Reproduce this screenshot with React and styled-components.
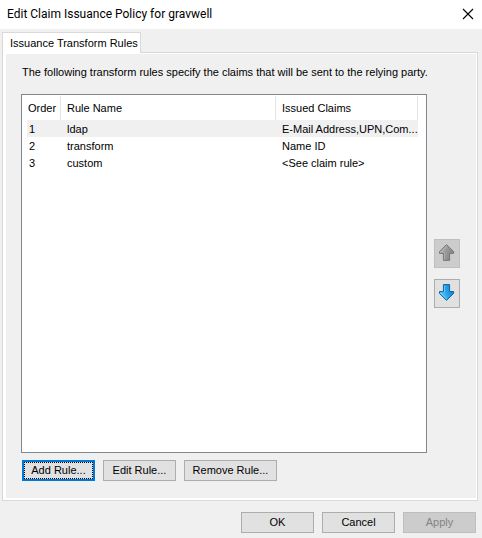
import React from "react";
import styled, { createGlobalStyle } from "styled-components";

const GlobalStyle = createGlobalStyle`
  *, *::before, *::after { box-sizing: border-box; }
  body {
    margin: 0;
    background: #f0f0f0;
    color: #000;
    font: 11px/17px "Liberation Sans", Arial, sans-serif;
  }
`;

const Dialog = styled.main`
  display: flex;
  flex-direction: column;
  min-height: 100vh;
  background: #f0f0f0;
`;

const TitleBar = styled.header`
  display: flex;
  align-items: center;
  justify-content: space-between;
  height: 29px;
  padding: 0 8px 2px 7px;
  background: #fff;
`;

const Title = styled.h1`
  margin: 0;
  font: 12px/20px Roboto, "Open Sans", sans-serif;
`;

const CloseButton = styled.button`
  display: flex;
  padding: 0;
  border: 0;
  background: none;
`;

const TabList = styled.div`
  display: flex;
  padding: 3px 4px 0 2px;
`;

const Tab = styled.button`
  position: relative;
  z-index: 1;
  height: 21px;
  width: 139px;
  margin-bottom: -1px;
  padding: 0 0 0 7px;
  border: 1px solid #d9d9d9;
  border-bottom: 0;
  background: #fff;
  color: inherit;
  font: inherit;
  text-align: left;
  white-space: nowrap;
`;

const Panel = styled.section`
  flex: 1;
  display: flex;
  flex-direction: column;
  margin: 0 4px 0 2px;
  padding: 11px 17px 19px 15px;
  border: 1px solid #d9d9d9;
  background: #f0f0f0;
  box-shadow: inset 3px 1px #fff, inset -1px -2px #fff;
`;

const Description = styled.p`
  margin: 0 0 13px 4px;
`;

const Content = styled.div`
  flex: 1;
  display: flex;
  gap: 7px;
  margin-left: 3px;
`;

const RuleList = styled.div`
  flex: 1;
  min-width: 0;
  padding: 1px 8px 1px 5px;
  border: 1px solid #828790;
  background: #fff;
`;

const Table = styled.table`
  width: 100%;
  table-layout: fixed;
  border-collapse: separate;
  border-spacing: 0;
  text-align: left;
`;

const OrderColumn = styled.col`
  width: 34px;
`;

const ClaimsColumn = styled.col`
  width: 142px;
`;

const HeaderCell = styled.th`
  height: 24px;
  padding: 0 0 0 ${(p) => (p.$first ? "1px" : "6px")};
  border-right: 1px solid #e5e5e5;
  font-weight: normal;
`;

const Row = styled.tr`
  background: ${(p) => (p.$selected ? "#f0f0f0" : "#fff")};
`;

const Cell = styled.td`
  height: 17px;
  padding: 2px 0 0 ${(p) => (p.$first ? "2px" : "6px")};
  line-height: 15px;
  white-space: nowrap;
`;

const MoveButtons = styled.div`
  display: flex;
  flex-direction: column;
  justify-content: center;
  gap: 11px;
`;

const Button = styled.button`
  height: 21px;
  width: ${(p) => (p.$wide ? "93px" : "73px")};
  padding: 0;
  border: 1px solid #adadad;
  background: #e1e1e1;
  color: #000;
  font: inherit;

  &:disabled {
    border-color: #bfbfbf;
    background: #ccc;
    color: #838383;
  }
`;

const DefaultButton = styled(Button)`
  border: 2px solid #0078d7;
  outline: 1px dotted #000;
  outline-offset: -3px;
`;

const MoveButton = styled(Button)`
  display: flex;
  align-items: center;
  justify-content: center;
  width: 26px;
  height: 29px;
  padding-bottom: 2px;
`;

const RuleActions = styled.div`
  display: flex;
  gap: 8px;
  margin: 7px 0 0 4px;
`;

const Footer = styled.footer`
  display: flex;
  justify-content: flex-end;
  gap: 8px;
  padding: 11px 6px 5px;
`;

const rules = [
  { name: "ldap", claims: "E-Mail Address,UPN,Com..." },
  { name: "transform", claims: "Name ID" },
  { name: "custom", claims: "<See claim rule>" },
];

function ArrowIcon({ down }) {
  const id = down ? "arrow-down" : "arrow-up";
  const [light, mid, dark, edge] = down
    ? ["#65cff5", "#28aaf0", "#1684d8", "#185f9c"]
    : ["#b4b4b4", "#999", "#858585", "#777"];
  return (
    <svg width="16" height="17" viewBox="0 0 16 17" aria-hidden="true">
      <defs>
        <linearGradient id={id} x1="0" y1="0" x2="1" y2="0.4">
          <stop offset="0.2" stopColor={light} />
          <stop offset="0.55" stopColor={mid} />
          <stop offset="1" stopColor={dark} />
        </linearGradient>
      </defs>
      <g transform={down ? "matrix(1 0 0 -1 0 17)" : undefined}>
        <path
          d="M7.5 0.6 L14.6 7.6 V9.4 H10.6 V16.4 H4.4 V9.4 H0.5 V7.6 Z"
          fill={`url(#${id})`}
          stroke={edge}
          strokeWidth="1"
          strokeLinejoin="round"
        />
        <path d="M2 8.2 L7.5 2.4 M5.5 8.5 V15.5" fill="none" stroke={light} strokeWidth="0.8" />
      </g>
    </svg>
  );
}

export default function App() {
  return (
    <>
      <GlobalStyle />
      <Dialog>
        <TitleBar>
          <Title>Edit Claim Issuance Policy for gravwell</Title>
          <CloseButton type="button" aria-label="Close">
            <svg width="12" height="12" viewBox="0 0 12 12" aria-hidden="true">
              <path d="M1 1 L11 11 M11 1 L1 11" stroke="#000" strokeWidth="1.1" />
            </svg>
          </CloseButton>
        </TitleBar>
        <TabList role="tablist">
          <Tab type="button" role="tab" id="rules-tab" aria-selected="true" aria-controls="rules-panel">
            Issuance Transform Rules
          </Tab>
        </TabList>
        <Panel role="tabpanel" id="rules-panel" aria-labelledby="rules-tab">
          <Description>
            The following transform rules specify the claims that will be sent to the relying party.
          </Description>
          <Content>
            <RuleList>
              <Table>
                <colgroup>
                  <OrderColumn />
                  <col />
                  <ClaimsColumn />
                </colgroup>
                <thead>
                  <tr>
                    <HeaderCell scope="col" $first>Order</HeaderCell>
                    <HeaderCell scope="col">Rule Name</HeaderCell>
                    <HeaderCell scope="col">Issued Claims</HeaderCell>
                  </tr>
                </thead>
                <tbody>
                  {rules.map((rule, index) => (
                    <Row key={rule.name} $selected={index === 0}>
                      <Cell $first>{index + 1}</Cell>
                      <Cell>{rule.name}</Cell>
                      <Cell>{rule.claims}</Cell>
                    </Row>
                  ))}
                </tbody>
              </Table>
            </RuleList>
            <MoveButtons>
              <MoveButton type="button" aria-label="Move rule up" disabled>
                <ArrowIcon />
              </MoveButton>
              <MoveButton type="button" aria-label="Move rule down">
                <ArrowIcon down />
              </MoveButton>
            </MoveButtons>
          </Content>
          <RuleActions>
            <DefaultButton type="button">Add Rule...</DefaultButton>
            <Button type="button">Edit Rule...</Button>
            <Button type="button" $wide>Remove Rule...</Button>
          </RuleActions>
        </Panel>
        <Footer>
          <Button type="button">OK</Button>
          <Button type="button">Cancel</Button>
          <Button type="button" disabled>Apply</Button>
        </Footer>
      </Dialog>
    </>
  );
}
